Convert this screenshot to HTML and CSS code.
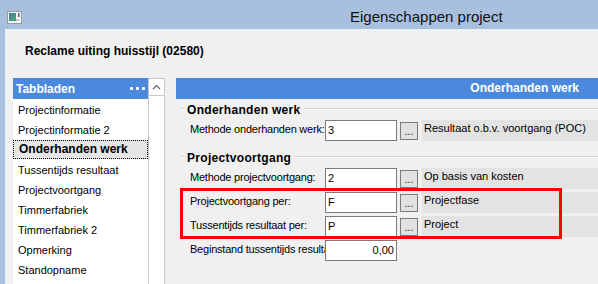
FILE: index.html
```html
<!DOCTYPE html>
<html lang="nl">
<head>
  <meta charset="UTF-8" />
  <title>Eigenschappen project</title>
  <link rel="stylesheet" href="styles.css">
</head>
<body>
  <div class="titlebar">
    <svg class="app-icon" width="15" height="13" viewBox="0 0 15 13">
      <rect x="0.5" y="0.5" width="14" height="12" fill="#f4f4f4" stroke="#9a9a9a"/>
      <defs>
        <linearGradient id="g" x1="0" y1="0" x2="1" y2="1">
          <stop offset="0" stop-color="#3d7fb0"/>
          <stop offset="1" stop-color="#4fa86a"/>
        </linearGradient>
      </defs>
      <rect x="2" y="2" width="7" height="8" fill="url(#g)"/>
      <rect x="11" y="2" width="1.5" height="4" fill="#2f6fa0"/>
      <rect x="9" y="8" width="3" height="2" fill="#c8c8c8"/>
    </svg>
    <div class="title">Eigenschappen project</div>
  </div>

  <div class="window">
    <div class="project-name">Reclame uiting huisstijl (02580)</div>

    <div class="panels">
      <div class="tabs">
        <div class="tab-list">
          <div class="tab-header">
            <span>Tabbladen</span>
            <span class="more"><i></i><i></i><i></i></span>
          </div>
          <div class="tab">Projectinformatie</div>
          <div class="tab">Projectinformatie 2</div>
          <div class="tab active">Onderhanden werk</div>
          <div class="tab">Tussentijds resultaat</div>
          <div class="tab">Projectvoortgang</div>
          <div class="tab">Timmerfabriek</div>
          <div class="tab">Timmerfabriek 2</div>
          <div class="tab">Opmerking</div>
          <div class="tab">Standopname</div>
        </div>
        <div class="scrollbar">
          <div class="scroll-up">
            <svg width="9" height="6" viewBox="0 0 9 6"><path d="M1 5 L4.5 1.5 L8 5" fill="none" stroke="#606060" stroke-width="1.2"/></svg>
          </div>
        </div>
      </div>

      <div class="page">
        <div class="page-header">Onderhanden werk</div>

        <div class="group first">
          <div class="group-title"><span>Onderhanden werk</span></div>
          <div class="row">
            <div class="label">Methode onderhanden werk:</div>
            <div class="field">3</div>
            <div class="pick">...</div>
            <div class="desc">Resultaat o.b.v. voortgang (POC)</div>
          </div>
        </div>

        <div class="group">
          <div class="group-title"><span>Projectvoortgang</span></div>
          <div class="row">
            <div class="label">Methode projectvoortgang:</div>
            <div class="field">2</div>
            <div class="pick">...</div>
            <div class="desc">Op basis van kosten</div>
          </div>
          <div class="row">
            <div class="label">Projectvoortgang per:</div>
            <div class="field">F</div>
            <div class="pick">...</div>
            <div class="desc">Projectfase</div>
          </div>
          <div class="row">
            <div class="label">Tussentijds resultaat per:</div>
            <div class="field">P</div>
            <div class="pick">...</div>
            <div class="desc">Project</div>
          </div>
          <div class="row">
            <div class="label">Beginstand tussentijds resultaat:</div>
            <div class="field number">0,00</div>
          </div>
        </div>

        <div class="highlight"></div>
      </div>
    </div>
  </div>
</body>
</html>
```

FILE: styles.css
```css
body {
  margin: 0;
  height: 284px;
  overflow: hidden;
  background: #a7c0dd;
  font-family: "Liberation Sans", Arial, sans-serif;
  font-size: 11px;
  color: #000;
}
.titlebar {
  height: 29px;
  display: flex;
  align-items: center;
}
.app-icon {
  margin-left: 7px;
  margin-top: 6px;
}
.title {
  margin-left: 328px;
  margin-top: 3px;
  font-size: 15px;
  color: #111;
}
.window {
  margin-left: 5px;
  height: 255px;
  background: #f0f0f0;
}
.project-name {
  padding: 15px 0 0 20px;
  height: 14px;
  line-height: 14px;
  font-size: 12px;
  font-weight: bold;
}
.panels {
  display: flex;
  margin-top: 20px;
  padding-left: 8px;
  gap: 11px;
  height: 206px;
}
.tabs {
  display: flex;
  width: 152px;
  background: #fff;
}
.tab-list {
  flex: 1;
}
.tab-header {
  height: 21px;
  margin-bottom: 1px;
  background: #4a89dc;
  color: #fff;
  font-size: 12px;
  font-weight: bold;
  display: flex;
  align-items: center;
  justify-content: space-between;
  padding: 0 3px;
}
.more {
  display: flex;
  gap: 3px;
}
.more i {
  width: 3px;
  height: 3px;
  border-radius: 1px;
  background: #fff;
}
.tab {
  height: 20px;
  line-height: 20px;
  padding-left: 5px;
  white-space: nowrap;
}
.tab.active {
  box-sizing: border-box;
  height: 19px;
  line-height: 17px;
  margin-bottom: 1px;
  padding-left: 5px;
  background: #e6e6e6;
  border: 1px dotted #000;
  font-size: 12px;
  font-weight: bold;
}
.scrollbar {
  width: 15px;
  border: 1px solid #c8c8c8;
  border-bottom: none;
}
.scroll-up {
  height: 16px;
  border-bottom: 1px solid #c8c8c8;
  display: flex;
  align-items: center;
  justify-content: center;
}
.page {
  flex: 1;
  position: relative;
}
.page-header {
  height: 21px;
  line-height: 21px;
  background: #4a89dc;
  color: #fff;
  font-size: 12px;
  font-weight: bold;
  text-align: right;
  padding-right: 19px;
}
.group {
  padding-left: 4px;
  margin-top: 8px;
}
.group.first {
  margin-top: 2px;
}
.group-title {
  height: 18px;
  display: flex;
  align-items: center;
  font-size: 12px;
  font-weight: bold;
  letter-spacing: 0.3px;
  margin-bottom: 1px;
}
.group-title::before,
.group-title::after {
  content: "";
  border-top: 1px solid #d6d6d6;
  border-bottom: 1px solid #fff;
  margin-top: -2px;
}
.group-title::before {
  width: 4px;
  margin-right: 3px;
}
.group-title::after {
  flex: 1;
  margin-left: 3px;
}
.row {
  display: flex;
  height: 21px;
  padding-left: 10px;
  margin-bottom: 3px;
}
.label {
  width: 135px;
  overflow: hidden;
  white-space: nowrap;
  line-height: 19px;
  letter-spacing: -0.22px;
}
.field {
  box-sizing: border-box;
  width: 72px;
  height: 21px;
  line-height: 19px;
  padding: 0 2px;
  background: #fff;
  border: 1px solid #7a7a7a;
}
.field.number {
  text-align: right;
}
.pick {
  box-sizing: border-box;
  width: 18px;
  height: 18px;
  margin: 2px 0 0 3px;
  background: #e1e1e1;
  border: 1px solid #7a7a7a;
  text-align: center;
  line-height: 18px;
  font-size: 10px;
}
.desc {
  flex: 1;
  margin-left: 4px;
  padding-left: 2px;
  background: #e3e3e3;
  line-height: 17px;
  white-space: nowrap;
}
.highlight {
  position: absolute;
  left: 4px;
  top: 110px;
  width: 382px;
  height: 51px;
  box-sizing: border-box;
  border: 3px solid #f00;
}
```
